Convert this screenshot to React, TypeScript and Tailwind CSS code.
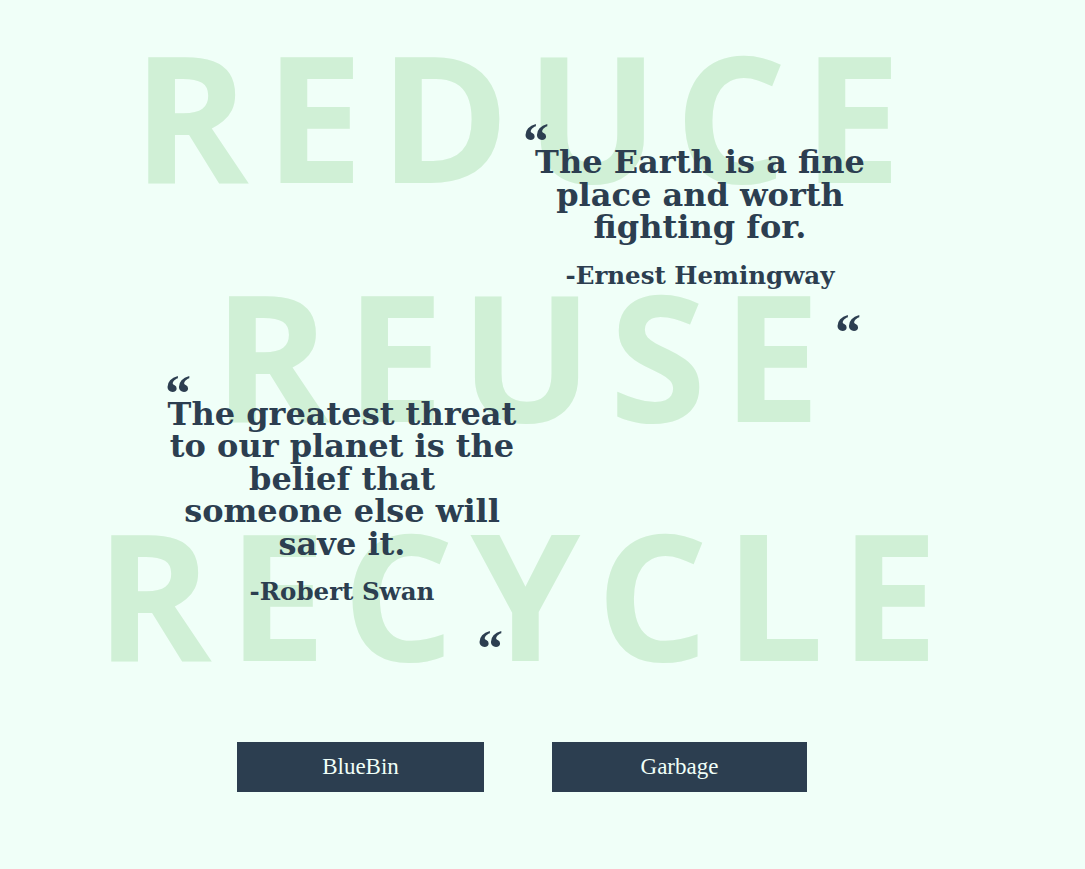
import React from "react";

const serif = { fontFamily: '"DejaVu Serif", Georgia, serif' };
const markFont = { fontFamily: '"Liberation Serif", "Times New Roman", serif' };

function Mark({ align }: { align: "left" | "right" }) {
  return (
    <span
      className={
        "block text-[52px] leading-[48px] " +
        (align === "left" ? "text-left" : "text-right")
      }
    >
      “
    </span>
  );
}

function Quote({ lines, author }: { lines: string[]; author: string }) {
  return (
    <div className="w-[354px] text-[#2c3e50]" style={serif}>
      <div className="h-[28px] font-bold" style={markFont}>
        <Mark align="left" />
      </div>
      <p className="whitespace-nowrap text-center text-[32px] font-bold leading-[32.5px]">
        {lines.map((l, i) => (
          <React.Fragment key={i}>
            {l}
            {i < lines.length - 1 && <br />}
          </React.Fragment>
        ))}
      </p>
      <p className="mt-[16px] whitespace-nowrap text-center text-[24.5px] font-bold leading-[32px]">
        {author}
      </p>
      <div className="mr-[16px] mt-[17px] h-[22px] font-bold" style={markFont}>
        <Mark align="right" />
      </div>
    </div>
  );
}

export default function App() {
  return (
    <div className="relative min-h-[869px] w-full overflow-hidden bg-[#f0fff8]">
      <div
        className="pointer-events-none absolute left-0 top-[-4px] w-[1050px] select-none text-center text-[176px] font-bold leading-[239px] tracking-[16px] text-[#d0f0d6]"
        style={{ fontFamily: '"Open Sans", sans-serif' }}
      >
        <div>REDUCE</div>
        <div>REUSE</div>
        <div>RECYCLE</div>
      </div>

      <div className="relative flex flex-col">
        <div className="ml-[523px] mt-[118px]">
          <Quote
            lines={["The Earth is a fine", "place and worth", "fighting for."]}
            author="-Ernest Hemingway"
          />
        </div>
        <div className="ml-[165px] mt-[39px]">
          <Quote
            lines={[
              "The greatest threat",
              "to our planet is the",
              "belief that",
              "someone else will",
              "save it.",
            ]}
            author="-Robert Swan"
          />
        </div>
        <div className="ml-[237px] mt-[95px] flex gap-[68px]">
          <button
            className="h-[50px] w-[247px] bg-[#2c3e50] text-[23px] text-[#f0fff8]"
            style={{ fontFamily: '"Liberation Serif", serif' }}
          >
            BlueBin
          </button>
          <button
            className="h-[50px] w-[255px] bg-[#2c3e50] text-[23px] text-[#f0fff8]"
            style={{ fontFamily: '"Liberation Serif", serif' }}
          >
            Garbage
          </button>
        </div>
      </div>
    </div>
  );
}
